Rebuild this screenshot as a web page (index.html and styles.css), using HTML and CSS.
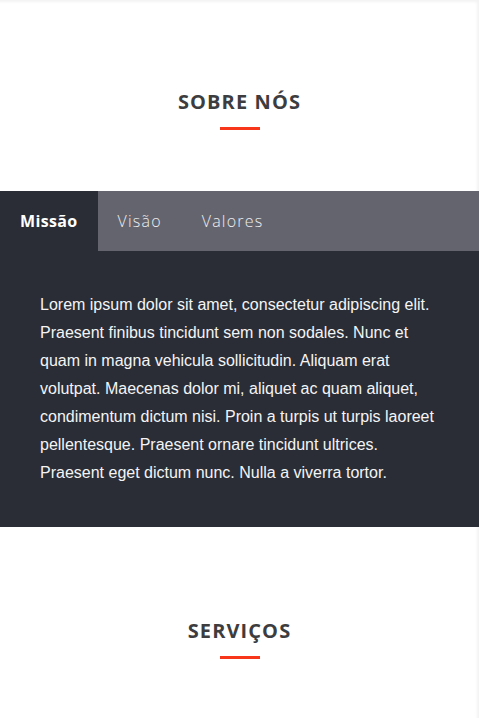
FILE: index.html
```html
<!DOCTYPE html>
<html lang="pt">
<head>
<meta charset="utf-8">
<title>Sobre nós</title>
<link rel="stylesheet" href="styles.css">
</head>
<body>
<section class="section section-about">
  <div class="section-head">
    <h2 class="section-title">SOBRE NÓS</h2>
    <span class="title-bar"></span>
  </div>
  <div class="tabs">
    <nav class="tab-list">
      <button class="tab tab-active">Missão</button>
      <button class="tab">Visão</button>
      <button class="tab">Valores</button>
    </nav>
    <div class="tab-panel">
      <p>Lorem ipsum dolor sit amet, consectetur adipiscing elit. Praesent finibus tincidunt sem non sodales. Nunc et quam in magna vehicula sollicitudin. Aliquam erat volutpat. Maecenas dolor mi, aliquet ac quam aliquet, condimentum dictum nisi. Proin a turpis ut turpis laoreet pellentesque. Praesent ornare tincidunt ultrices. Praesent eget dictum nunc. Nulla a viverra tortor.</p>
    </div>
  </div>
</section>
<section class="section section-services">
  <div class="section-head">
    <h2 class="section-title">SERVIÇOS</h2>
    <span class="title-bar"></span>
  </div>
</section>
</body>
</html>
```

FILE: styles.css
```css
html, body {
  margin: 0;
  padding: 0;
}

body {
  min-height: 100vh;
  background: #ffffff;
  font-family: "Liberation Sans", Arial, sans-serif;
  box-shadow: inset -2px 2px 3px rgba(0, 0, 0, 0.05);
}

.section-about {
  padding-top: 87px;
}

.section-services {
  padding-top: 89px;
  padding-bottom: 60px;
}

.section-head {
  display: flex;
  flex-direction: column;
  align-items: center;
}

.section-title {
  margin: 0;
  font-family: "Open Sans", "Noto Sans", sans-serif;
  font-weight: 700;
  font-size: 20px;
  line-height: 30px;
  color: #3d3d40;
  letter-spacing: 1.1px;
}

.title-bar {
  display: block;
  width: 40px;
  height: 3px;
  margin-top: 10px;
  background: #f8361a;
}

.section-about .section-head {
  margin-bottom: 61px;
}

.tabs {
  background: #2a2d35;
}

.tab-list {
  display: flex;
  background: #63646e;
  height: 60px;
}

.tab {
  border: 0;
  margin: 0;
  padding: 0 20px;
  background: transparent;
  font-family: "Open Sans", "Noto Sans", sans-serif;
  font-size: 16px;
  font-weight: 300;
  line-height: 60px;
  letter-spacing: 1.2px;
  color: #eeeef0;
  cursor: pointer;
}

.tab-active {
  background: #2a2d35;
  color: #ffffff;
  font-weight: 700;
  letter-spacing: 0.35px;
}

.tab-panel {
  padding: 40px 40px;
}

.tab-panel p {
  margin: 0;
  font-family: "Liberation Sans", Arial, sans-serif;
  font-size: 16px;
  line-height: 28px;
  color: #f4f4f6;
}
```
